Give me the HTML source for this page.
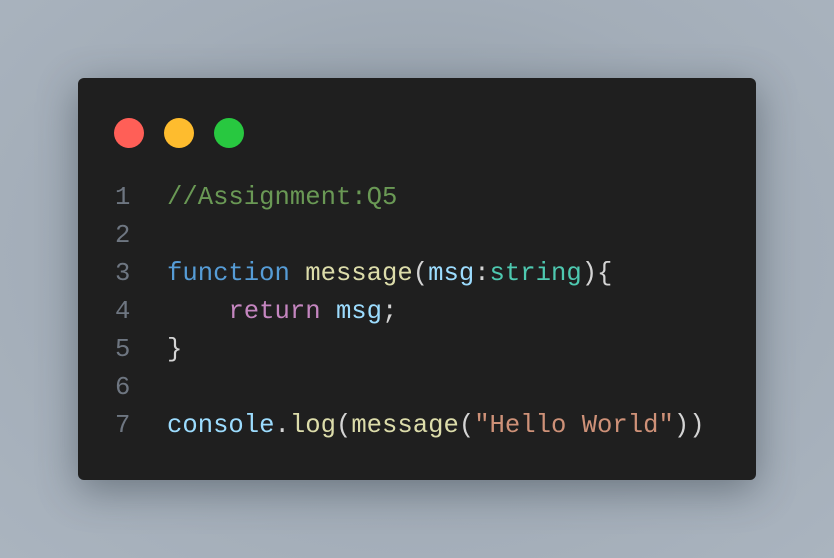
<!DOCTYPE html>
<html><head><meta charset="utf-8"><style>
html,body{margin:0;padding:0;}
body{width:834px;height:558px;overflow:hidden;background:radial-gradient(ellipse at 50% 45%,#8e99a4 0%,#a3adb8 60%,#aab4bf 100%);position:relative;}
.card{position:absolute;left:78px;top:78px;width:678px;height:402px;background:#1f1f1f;border-radius:6px;box-shadow:0 10px 40px rgba(40,50,60,0.45);}
.dot{position:absolute;top:40px;width:30px;height:30px;border-radius:50%;}
.code{position:absolute;left:0;top:101px;width:678px;font-family:"Liberation Mono",monospace;font-size:25.6px;line-height:38px;color:#d4d4d4;}
.row{position:relative;height:38px;}
.ln{position:absolute;left:37px;top:0;color:#6e7681;}
.tx{position:absolute;left:89px;top:0;white-space:pre;}
.c{color:#6a9955}.k{color:#569cd6}.f{color:#dcdcaa}.v{color:#9cdcfe}.t{color:#4ec9b0}.r{color:#c586c0}.s{color:#ce9178}
</style></head><body>
<div class="card">
<div class="dot" style="left:36px;background:#ff5f57"></div>
<div class="dot" style="left:86px;background:#febc2e"></div>
<div class="dot" style="left:136px;background:#28c840"></div>
<div class="code"><div class="row"><span class="ln">1</span><span class="tx"><span class="c">//Assignment:Q5</span></span></div><div class="row"><span class="ln">2</span></div><div class="row"><span class="ln">3</span><span class="tx"><span class="k">function</span> <span class="f">message</span>(<span class="v">msg</span>:<span class="t">string</span>){</span></div><div class="row"><span class="ln">4</span><span class="tx">    <span class="r">return</span> <span class="v">msg</span>;</span></div><div class="row"><span class="ln">5</span><span class="tx">}</span></div><div class="row"><span class="ln">6</span></div><div class="row"><span class="ln">7</span><span class="tx"><span class="v">console</span>.<span class="f">log</span>(<span class="f">message</span>(<span class="s">"Hello World"</span>))</span></div></div>
</div>
</body></html>
